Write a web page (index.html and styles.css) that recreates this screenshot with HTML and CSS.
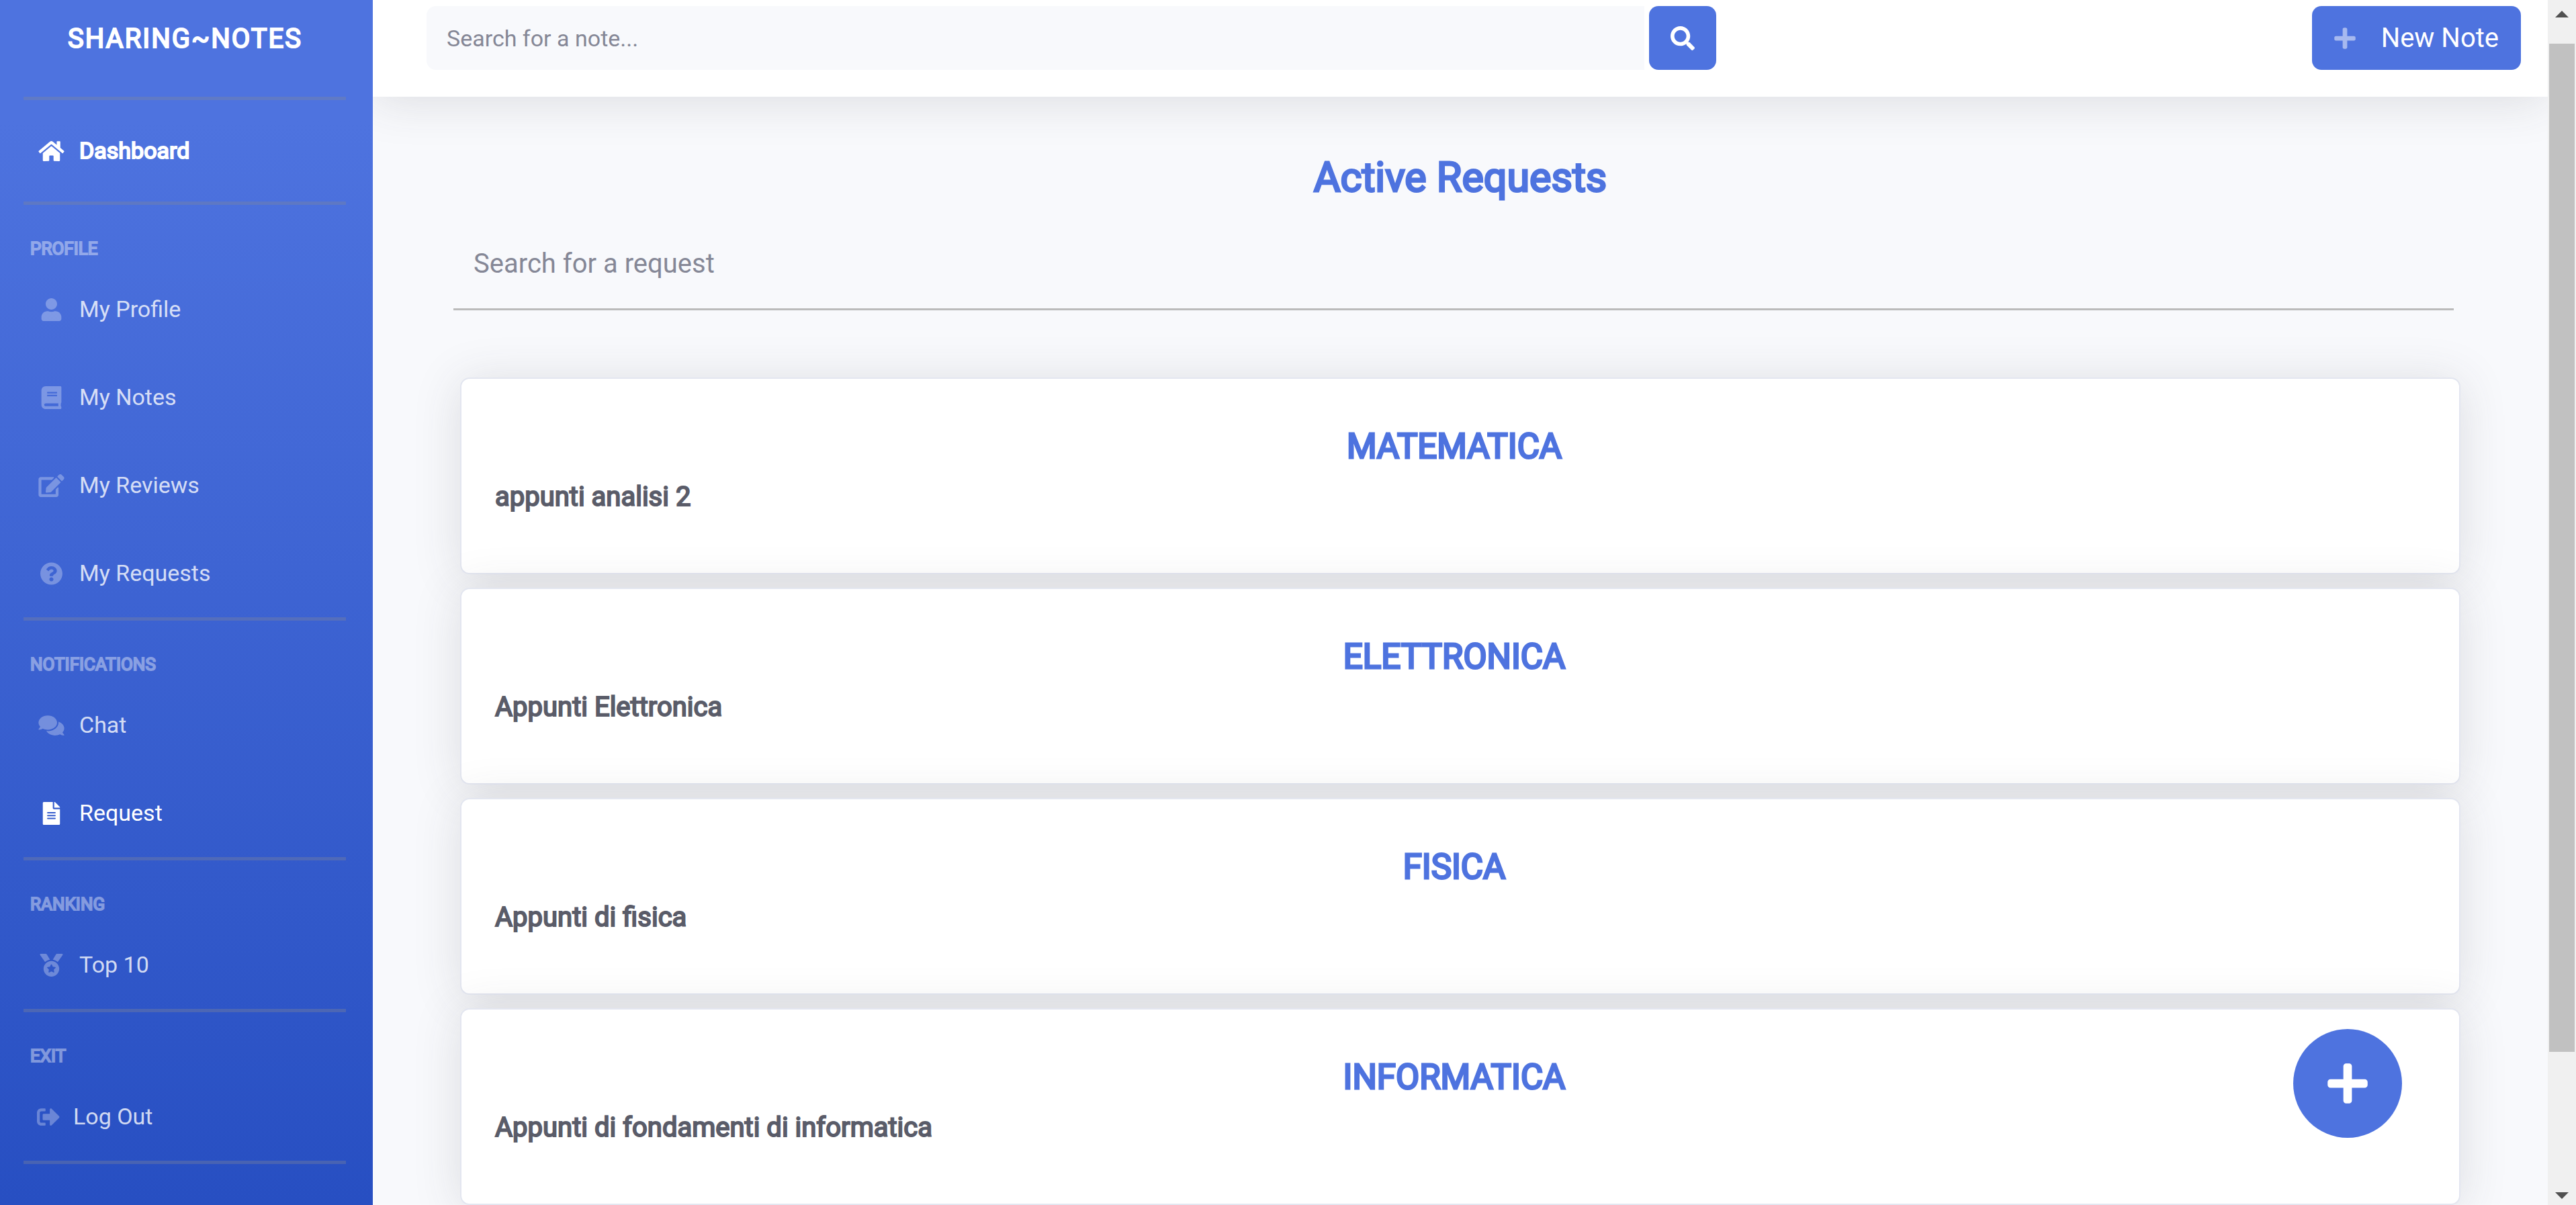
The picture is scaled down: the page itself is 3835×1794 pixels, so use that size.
FILE: index.html
```html
<!DOCTYPE html>
<html lang="en">
<head>
<meta charset="utf-8">
<meta name="viewport" content="width=device-width, initial-scale=1">
<title>Sharing~Notes</title>
<link rel="stylesheet" href="styles.css">
</head>
<body>
<svg class="sprite" aria-hidden="true">
  <symbol id="home" viewBox="0 0 576 512"><path d="M280.37 148.26L96 300.11V464a16 16 0 0 0 16 16l112.06-.29a16 16 0 0 0 15.92-16V368a16 16 0 0 1 16-16h64a16 16 0 0 1 16 16v95.64a16 16 0 0 0 16 16.05L464 480a16 16 0 0 0 16-16V300L295.67 148.26a12.19 12.19 0 0 0-15.3 0zM571.6 251.47L488 182.56V44.05a12 12 0 0 0-12-12h-56a12 12 0 0 0-12 12v72.61L318.47 43a48 48 0 0 0-61 0L4.34 251.47a12 12 0 0 0-1.6 16.9l25.5 31A12 12 0 0 0 45.15 301l235.22-193.74a12.19 12.19 0 0 1 15.3 0L530.9 301a12 12 0 0 0 16.9-1.6l25.5-31a12 12 0 0 0-1.7-16.93z"/></symbol>
  <symbol id="user" viewBox="0 0 448 512"><path d="M224 256c70.7 0 128-57.3 128-128S294.7 0 224 0 96 57.3 96 128s57.3 128 128 128zm89.6 32h-16.7c-22.2 10.2-46.9 16-72.9 16s-50.6-5.8-72.9-16h-16.7C60.2 288 0 348.2 0 422.4V464c0 26.5 21.5 48 48 48h352c26.5 0 48-21.5 48-48v-41.6c0-74.2-60.2-134.4-134.4-134.4z"/></symbol>
  <symbol id="book" viewBox="0 0 448 512"><path d="M448 360V24c0-13.3-10.7-24-24-24H96C43 0 0 43 0 96v320c0 53 43 96 96 96h328c13.3 0 24-10.7 24-24v-16c0-7.5-3.5-14.3-8.9-18.7-4.2-15.4-4.2-59.3 0-74.7 5.4-4.3 8.9-11.1 8.9-18.6zM128 134c0-3.3 2.7-6 6-6h212c3.3 0 6 2.7 6 6v20c0 3.3-2.7 6-6 6H134c-3.3 0-6-2.7-6-6v-20zm0 64c0-3.3 2.7-6 6-6h212c3.3 0 6 2.7 6 6v20c0 3.3-2.7 6-6 6H134c-3.3 0-6-2.7-6-6v-20zm253.4 250H96c-17.7 0-32-14.3-32-32 0-17.6 14.4-32 32-32h285.4c-1.9 17.1-1.9 46.9 0 64z"/></symbol>
  <symbol id="edit" viewBox="0 0 576 512"><path d="M402.6 83.2l90.2 90.2c3.8 3.8 3.8 10 0 13.8L274.4 405.6l-92.8 10.3c-12.4 1.4-22.9-9.1-21.5-21.5l10.3-92.8L388.8 83.2c3.8-3.8 10-3.8 13.8 0zm162-22.9l-48.8-48.8c-15.2-15.2-39.9-15.2-55.2 0l-35.4 35.4c-3.8 3.8-3.8 10 0 13.8l90.2 90.2c3.8 3.8 10 3.8 13.8 0l35.4-35.4c15.2-15.3 15.2-40 0-55.2zM384 346.2V448H64V128h229.8c3.2 0 6.2-1.3 8.5-3.5l40-40c7.6-7.6 2.2-20.5-8.5-20.5H48C21.5 64 0 85.5 0 112v352c0 26.5 21.5 48 48 48h352c26.5 0 48-21.5 48-48V306.2c0-10.7-12.9-16-20.5-8.5l-40 40c-2.2 2.3-3.5 5.3-3.5 8.5z"/></symbol>
  <symbol id="question" viewBox="0 0 512 512"><path d="M504 256c0 136.997-111.043 248-248 248S8 392.997 8 256C8 119.083 119.043 8 256 8s248 111.083 248 248zM262.655 90c-54.497 0-89.255 22.957-116.549 63.758-3.536 5.286-2.353 12.415 2.715 16.258l34.699 26.31c5.205 3.947 12.621 3.008 16.665-2.122 17.864-22.658 30.113-35.797 57.303-35.797 20.429 0 45.698 13.148 45.698 32.958 0 14.976-12.363 22.667-32.534 33.976C247.128 238.528 216 254.941 216 296v4c0 6.627 5.373 12 12 12h56c6.627 0 12-5.373 12-12v-1.333c0-28.462 83.186-29.647 83.186-106.667 0-58.002-60.165-102-116.531-102zM256 338c-25.365 0-46 20.635-46 46 0 25.364 20.635 46 46 46s46-20.636 46-46c0-25.365-20.635-46-46-46z"/></symbol>
  <symbol id="comments" viewBox="0 0 576 512"><path d="M416 192c0-88.4-93.1-160-208-160S0 103.6 0 192c0 34.3 14.1 65.9 38 92-13.4 30.2-35.5 54.2-35.8 54.5-2.2 2.3-2.8 5.7-1.5 8.7S4.8 352 8 352c36.6 0 66.9-12.3 88.7-25 32.2 15.7 70.3 25 111.3 25 114.9 0 208-71.6 208-160zm122 220c23.9-26 38-57.7 38-92 0-66.9-53.5-124.2-129.3-148.1.9 6.6 1.3 13.3 1.3 20.1 0 105.9-107.7 192-240 192-10.8 0-21.3-.8-31.7-1.9C207.8 439.6 281.8 480 368 480c41 0 79.1-9.2 111.3-25 21.8 12.7 52.1 25 88.7 25 3.2 0 6.1-1.9 7.3-4.8 1.3-2.9.7-6.3-1.5-8.7-.3-.3-22.4-24.2-35.8-54.5z"/></symbol>
  <symbol id="file" viewBox="0 0 384 512"><path d="M224 136V0H24C10.7 0 0 10.7 0 24v464c0 13.3 10.7 24 24 24h336c13.3 0 24-10.7 24-24V160H248c-13.2 0-24-10.8-24-24zm64 236c0 6.6-5.4 12-12 12H108c-6.6 0-12-5.4-12-12v-8c0-6.6 5.4-12 12-12h168c6.6 0 12 5.4 12 12v8zm0-64c0 6.6-5.4 12-12 12H108c-6.6 0-12-5.4-12-12v-8c0-6.6 5.4-12 12-12h168c6.6 0 12 5.4 12 12v8zm0-72v8c0 6.6-5.4 12-12 12H108c-6.6 0-12-5.4-12-12v-8c0-6.6 5.4-12 12-12h168c6.6 0 12 5.4 12 12zm96-114.1v6.1H256V0h6.1c6.4 0 12.5 2.5 17 7l97.9 98c4.5 4.5 7 10.6 7 16.9z"/></symbol>
  <symbol id="medal" viewBox="0 0 512 512"><path d="M223.75 130.75L154.62 15.54A31.997 31.997 0 0 0 127.18 0H16.03C3.08 0-4.5 14.57 2.92 25.18l111.27 158.96c29.72-27.77 67.52-46.83 109.56-53.39zM495.97 0H384.82c-11.24 0-21.66 5.9-27.44 15.54l-69.13 115.21c42.04 6.56 79.84 25.62 109.56 53.38L509.08 25.18C516.5 14.57 508.92 0 495.97 0zM256 160c-97.2 0-176 78.8-176 176s78.8 176 176 176 176-78.8 176-176-78.8-176-176-176zm92.52 157.26l-37.93 36.96 8.97 52.22c1.6 9.36-8.26 16.51-16.65 12.09L256 393.88l-46.9 24.65c-8.4 4.45-18.25-2.74-16.65-12.09l8.97-52.22-37.93-36.96c-6.82-6.64-3.05-18.23 6.35-19.59l52.43-7.64 23.43-47.52c2.11-4.28 6.19-6.39 10.28-6.39 4.11 0 8.22 2.14 10.33 6.39l23.43 47.52 52.43 7.64c9.4 1.36 13.17 12.95 6.35 19.59z"/></symbol>
  <symbol id="signout" viewBox="0 0 512 512"><path d="M497 273L329 441c-15 15-41 4.5-41-17v-96H152c-13.3 0-24-10.7-24-24v-96c0-13.3 10.7-24 24-24h136V88c0-21.4 25.9-32 41-17l168 168c9.3 9.4 9.3 24.6 0 34zM192 436v-40c0-6.6-5.4-12-12-12H96c-17.7 0-32-14.3-32-32V160c0-17.7 14.3-32 32-32h84c6.6 0 12-5.4 12-12V76c0-6.6-5.4-12-12-12H96c-53 0-96 43-96 96v192c0 53 43 96 96 96h84c6.6 0 12-5.4 12-12z"/></symbol>
  <symbol id="search" viewBox="0 0 512 512"><path d="M505 442.7L405.3 343c-4.5-4.5-10.6-7-17-7H372c27.6-35.3 44-79.7 44-128C416 93.1 322.9 0 208 0S0 93.1 0 208s93.1 208 208 208c48.3 0 92.7-16.4 128-44v16.3c0 6.4 2.5 12.5 7 17l99.7 99.7c9.4 9.4 24.6 9.4 33.9 0l28.3-28.3c9.4-9.4 9.4-24.6.1-34zM208 336c-70.7 0-128-57.2-128-128 0-70.7 57.2-128 128-128 70.7 0 128 57.2 128 128 0 70.7-57.2 128-128 128z"/></symbol>
  <symbol id="plus" viewBox="0 0 448 512"><path d="M416 208H272V64c0-17.67-14.33-32-32-32h-32c-17.67 0-32 14.33-32 32v144H32c-17.67 0-32 14.33-32 32v32c0 17.67 14.33 32 32 32h144v144c0 17.67 14.33 32 32 32h32c17.67 0 32-14.33 32-32V304h144c17.67 0 32-14.33 32-32v-32c0-17.67-14.33-32-32-32z"/></symbol>
</svg>

<div class="layout">
  <nav class="sidebar">
    <a class="brand strong" href="#">SHARING~NOTES</a>
    <hr class="divider">
    <a class="nav-link nav-home active strong" href="#"><svg class="nav-icon"><use href="#home"/></svg>Dashboard</a>
    <hr class="divider">

    <h2 class="nav-heading strong">PROFILE</h2>
    <a class="nav-link" href="#"><svg class="nav-icon"><use href="#user"/></svg>My Profile</a>
    <a class="nav-link" href="#"><svg class="nav-icon"><use href="#book"/></svg>My Notes</a>
    <a class="nav-link" href="#"><svg class="nav-icon"><use href="#edit"/></svg>My Reviews</a>
    <a class="nav-link" href="#"><svg class="nav-icon"><use href="#question"/></svg>My Requests</a>
    <hr class="divider">

    <h2 class="nav-heading strong">NOTIFICATIONS</h2>
    <a class="nav-link" href="#"><svg class="nav-icon"><use href="#comments"/></svg>Chat</a>
    <a class="nav-link active" href="#"><svg class="nav-icon"><use href="#file"/></svg>Request</a>
    <hr class="divider">

    <h2 class="nav-heading strong">RANKING</h2>
    <a class="nav-link" href="#"><svg class="nav-icon"><use href="#medal"/></svg>Top 10</a>
    <hr class="divider">

    <h2 class="nav-heading strong">EXIT</h2>
    <a class="nav-link" href="#"><svg class="nav-icon narrow"><use href="#signout"/></svg>Log Out</a>
    <hr class="divider">
  </nav>

  <div class="page">
    <header class="topbar">
      <form class="note-search">
        <input class="note-input" type="text" placeholder="Search for a note..." aria-label="Search for a note">
        <button class="search-button" type="button" aria-label="Search"><svg class="button-icon"><use href="#search"/></svg></button>
      </form>
      <button class="new-note" type="button"><svg class="button-icon dim"><use href="#plus"/></svg>New Note</button>
    </header>

    <main class="content">
      <h1 class="title heavy">Active Requests</h1>
      <input class="request-input" type="text" placeholder="Search for a request" aria-label="Search for a request">
      <div class="cards">
        <article class="card"><h2 class="card-title heavy">MATEMATICA</h2><p class="card-text strong">appunti analisi 2</p></article>
        <article class="card"><h2 class="card-title heavy">ELETTRONICA</h2><p class="card-text strong">Appunti Elettronica</p></article>
        <article class="card"><h2 class="card-title heavy">FISICA</h2><p class="card-text strong">Appunti di fisica</p></article>
        <article class="card"><h2 class="card-title heavy">INFORMATICA</h2><p class="card-text strong">Appunti di fondamenti di informatica</p></article>
      </div>
    </main>
  </div>

  <div class="scrollbar" aria-hidden="true">
    <svg class="arrow" viewBox="0 0 20 10"><path d="M10 0L20 10H0z"/></svg>
    <div class="track"><div class="thumb"></div></div>
    <svg class="arrow" viewBox="0 0 20 10"><path d="M0 0H20L10 10z"/></svg>
  </div>
</div>

<button class="fab" type="button" aria-label="Add request"><svg class="fab-icon"><use href="#plus"/></svg></button>
</body>
</html>
```
FILE: styles.css
```css
:root {
  --primary: #4e73df;
  --surface: #f8f9fc;
  --shadow: 0 6px 70px rgba(58, 59, 69, .15);
}

* { box-sizing: border-box; }

body {
  margin: 0;
  background: var(--surface);
  color: #858796;
  font: 400 40px/60px Roboto, sans-serif;
}

h1, h2, p { margin: 0; font-weight: 400; }
a { color: inherit; text-decoration: none; }
svg { fill: currentColor; flex: none; stroke: none; }
button, input { font: inherit; border: 0; margin: 0; }
button { cursor: pointer; }

.sprite { display: none; }

/* Thickened regular weight, used for labels and titles */
.strong { -webkit-text-stroke: 2px currentColor; }
.heavy { -webkit-text-stroke: 3px currentColor; }

.layout {
  display: grid;
  grid-template-columns: 555px minmax(0, 1fr) 42px;
  min-height: 100vh;
}

/* Sidebar */
.sidebar {
  position: relative;
  z-index: 2;
  background: linear-gradient(180deg, #4e73df 10%, #224abe 112%);
  color: rgba(255, 255, 255, .8);
}

.brand {
  display: block;
  padding: 28px 4px 26px 0;
  margin-bottom: 30px;
  color: #fff;
  text-align: center;
  letter-spacing: 2px;
}

.divider {
  height: 5px;
  margin: 0 40px 0 35px;
  border: 0;
  background: rgba(133, 135, 150, .35);
}

.nav-heading {
  padding: 46px 45px 5px;
  color: #fff;
  font-size: 26px;
  line-height: 39px;
  opacity: .4;
}

.nav-link {
  display: flex;
  align-items: center;
  gap: 20px;
  padding: 40px 55px;
  font-size: 34px;
  line-height: 51px;
}

.nav-home { margin: 10px 0; }
.nav-link.active { color: #fff; }

.nav-icon {
  width: 43px;
  height: 34px;
  color: rgba(255, 255, 255, .3);
}

.nav-icon.narrow { width: 34px; }
.active .nav-icon { color: #fff; }

/* Main column */
.page {
  display: flex;
  flex-direction: column;
  overflow: hidden;
}

.topbar {
  position: relative;
  z-index: 1;
  display: flex;
  justify-content: space-between;
  padding: 9px 40px 40px 80px;
  background: #fff;
  box-shadow: var(--shadow);
}

.note-search {
  display: flex;
  gap: 7px;
  width: 62%;
  max-width: 1920px;
}

.note-input {
  flex: 1;
  min-width: 0;
  height: 95px;
  padding: 0 30px;
  border-radius: 14px 0 0 14px;
  background: var(--surface);
  font-size: 34px;
}

input::placeholder { color: #858796; opacity: 1; }

.search-button,
.new-note {
  display: flex;
  align-items: center;
  justify-content: center;
  border-radius: 14px;
  background: var(--primary);
  color: #fff;
}

.search-button { width: 100px; padding: 0; }
.new-note { gap: 38px; padding: 0 33px; }

.button-icon { width: 36px; height: 36px; }
.button-icon.dim { width: 32px; opacity: .5; }

.content {
  display: flex;
  flex-direction: column;
}

.title {
  padding-top: 80px;
  color: var(--primary);
  font-size: 61px;
  line-height: 80px;
  text-align: center;
}

.request-input {
  height: 138px;
  margin: 20px 140px 0 120px;
  padding: 2px 30px 0;
  border-bottom: 3px solid #bbb;
  background: none;
}

.cards {
  display: flex;
  flex-direction: column;
  gap: 20px;
  padding: 100px 130px 0;
}

.card {
  padding: 71px 68px 83px 50px;
  border: 2px solid #e3e6f0;
  border-radius: 14px;
  background: #fff;
  box-shadow: var(--shadow);
}

.card-title {
  margin-bottom: 15px;
  color: var(--primary);
  font-size: 51px;
  line-height: 60px;
  text-align: center;
}

.card-text { color: #5a5c69; }

/* Scrollbar column */
.scrollbar {
  position: relative;
  z-index: 2;
  display: flex;
  flex-direction: column;
  align-items: center;
  justify-content: space-between;
  padding: 16px 0 9px;
  background: #f0f0f0;
  color: #505050;
}

.arrow { width: 20px; height: 10px; }

.track {
  flex: 1;
  width: 38px;
  padding: 39px 0 23px;
}

.thumb { height: 89%; background: #c1c1c1; }

.fab {
  position: fixed;
  right: 259px;
  bottom: 100px;
  z-index: 3;
  display: flex;
  align-items: center;
  justify-content: center;
  width: 162px;
  height: 162px;
  padding: 0;
  border-radius: 50%;
  background: var(--primary);
  color: #fff;
}

.fab-icon { width: 60px; height: 68px; }
```
